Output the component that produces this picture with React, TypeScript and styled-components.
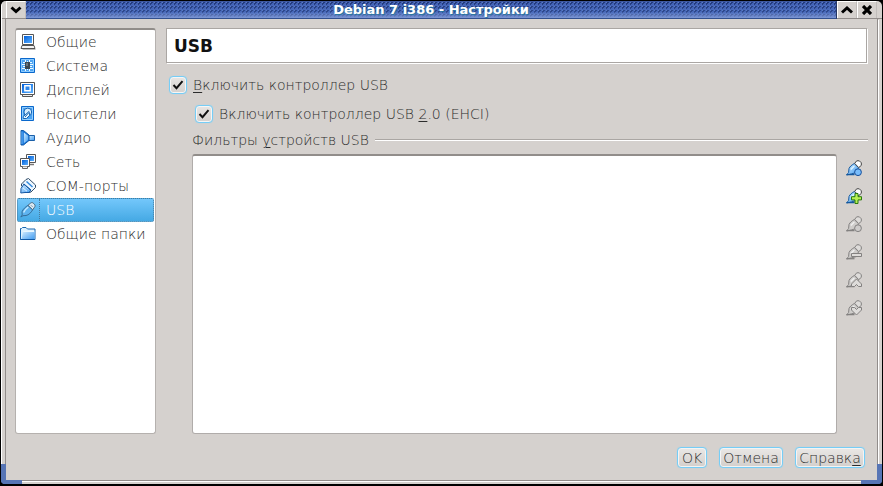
import React from 'react';
import styled, { createGlobalStyle } from 'styled-components';

const Global = createGlobalStyle`
  *, *::before, *::after { box-sizing: border-box; }
  html, body { margin: 0; background: #000; overflow: hidden; }
  body { font: 200 14px/18px "DejaVu Sans", sans-serif; color: #2c2c2c; }
`;

const Frame = styled.div`
  position: relative;
  width: 883px;
  height: 486px;
  padding: 1px 1px 2px;
  background: #000;
  border-radius: 6px;
  overflow: hidden;
`;
const Shell = styled.div`
  height: 483px;
  display: flex;
  flex-direction: column;
  background: #d5d1ce;
  border-left: 1px solid #fff;
  border-radius: 5px;
  overflow: hidden;
`;
const TitleBar = styled.header`
  height: 18px;
  flex: none;
  display: flex;
  border-bottom: 1px solid #918c8a;
  padding: 0 5px 0 4px;
`;
const TitleButton = styled.div`
  width: 20px;
  height: 17px;
  display: grid;
  place-items: center;
  border-left: 1px solid #fff;
  border-top: 1px solid #fff;
  border-right: 1px solid #c0bcba;
  background: #d5d1ce;
`;
const TitleText = styled.div`
  flex: 1;
  height: 18px;
  text-align: center;
  color: #fff;
  font-weight: 700;
  font-size: 13px;
  line-height: 15px;
  text-shadow: 1px 1px 1px #23789e;
  border-bottom: 1px solid #33508f;
  border-top: 1px solid #3d57a0;
  border-right: 1px solid #263763;
  background:
    linear-gradient(rgba(62, 94, 182, 0), rgba(85, 120, 195, 0.25) 60%, rgba(130, 155, 215, 0.9)),
    linear-gradient(135deg, #5c7cc6 12.5%, #22397c 12.5% 37.5%, #4161b4 37.5% 62.5%, #5c7cc6 62.5% 62.5%, #4767b8 62.5% 87.5%, #5c7cc6 87.5%) 0 0 / 4px 4px;
`;
const Content = styled.main`
  flex: 1;
  display: flex;
  margin: 0 4px 0 3px;
  padding: 9px 9px 0;
  border: solid #918c8a;
  border-width: 0 1px 1px;
  gap: 10px;
  box-shadow: 1px 1px 0 #fff, 0 1px 0 #fff;
`;
const BottomEdge = styled.div`
  flex: none;
  height: 3px;
`;
const Corner = styled.div<{ $side: 'left' | 'right' }>`
  position: absolute;
  bottom: 2px;
  ${p => p.$side}: 1px;
  width: 21px;
  height: 20px;
  border: solid #5775b5;
  border-width: 0 0 4px;
  border-${p => p.$side}: 5px solid #5775b5;
  border-bottom-${p => p.$side}-radius: 4px;
`;
const Sidebar = styled.nav`
  width: 141px;
  height: 406px;
  padding: 0 1px 1px;
  border: 1px solid #b5b1ae;
  border-top: 2px solid #918d8a;
  border-radius: 3px;
  background: #fff;
`;
const Item = styled.div<{ $active?: boolean }>`
  height: 24px;
  display: flex;
  align-items: center;
  border-radius: 2px;
  color: ${p => (p.$active ? '#fff' : 'inherit')};
  background: ${p => (p.$active ? 'linear-gradient(#73c7fb, #45a9e4)' : 'none')};
  border: 1px ${p => (p.$active ? 'dotted #487b9b' : 'solid transparent')};
`;
const ItemIcon = styled.span<{ $active?: boolean }>`
  width: 22px;
  height: 22px;
  padding: 3px 0 0 2px;
  line-height: 0;
  border-right: 1px ${p => (p.$active ? 'dotted #487b9b' : 'solid transparent')};
`;
const ItemLabel = styled.span`
  margin-left: 6px;
  white-space: nowrap;
`;
const Page = styled.section`
  width: 702px;
  display: flex;
  flex-direction: column;
`;
const Heading = styled.h1`
  height: 35px;
  flex: none;
  margin: 0;
  padding-left: 7px;
  background: #fff;
  border: 1px solid #aaa6a3;
  box-shadow: 1px 1px 0 #fff;
  width: 701px;
  font-size: 17px;
  line-height: 35px;
  font-weight: 700;
  color: #111;
`;
const CheckRow = styled.label<{ $nested?: boolean }>`
  height: 20px;
  display: flex;
  align-items: center;
  gap: 6px;
  margin: ${p => (p.$nested ? '9px 0 0 29px' : '12px 0 0 3px')};
`;
const CheckBox = styled.span`
  width: 18px;
  height: 18px;
  display: grid;
  place-items: center;
  border: 1px solid #76cdf6;
  border-radius: 4px;
  background: linear-gradient(#e8e6e4, #d5d1ce);
  box-shadow: inset 0 0 0 1px #f6f6f6, 0 0 1px #8ad6f8;
`;
const U = styled.span`
  text-decoration: underline;
  text-decoration-thickness: 1px;
  text-underline-offset: 2px;
`;
const Legend = styled.div`
  height: 20px;
  margin: 6px 0 0 26px;
  display: flex;
  align-items: center;
  gap: 6px;
`;
const Rule = styled.i`
  flex: 1;
  height: 2px;
  border-top: 1px solid #aaa6a3;
  border-bottom: 1px solid #fff;
`;
const FilterArea = styled.div`
  display: flex;
  margin: 4px 0 0 26px;
  gap: 9px;
`;
const FilterList = styled.div`
  width: 645px;
  height: 280px;
  background: #fff;
  border: 1px solid #b0acaa;
  border-top: 2px solid #918d8a;
  border-radius: 3px;
`;
const Tools = styled.div`
  display: flex;
  flex-direction: column;
  gap: 12px;
  padding-top: 6px;
  line-height: 0;
`;
const Footer = styled.footer`
  display: flex;
  justify-content: flex-end;
  gap: 12px;
  margin: 13px 3px 0 0;
`;
const Button = styled.button<{ $w: number }>`
  width: ${p => p.$w}px;
  height: 21px;
  padding: 0;
  font: inherit;
  line-height: 18px;
  color: inherit;
  white-space: nowrap;
  border: 1px solid #76cdf6;
  border-radius: 4px;
  background: linear-gradient(#eae8e6, #d3cfcc);
  box-shadow: inset 0 0 0 1px #f4f4f4, 0 0 1px #8ad6f8;
`;
const DefsSvg = styled.svg`
  position: absolute;
`;

const Svg = ({ children }: { children: React.ReactNode }) => (
  <svg width="16" height="16" viewBox="0 0 16 16">{children}</svg>
);
const Defs = () => (
  <DefsSvg width="0" height="0">
    <defs>
      <linearGradient id="blue" x1="0" y1="0" x2="1" y2="1">
        <stop offset="0" stopColor="#005fd8" /><stop offset="1" stopColor="#5cb0ff" />
      </linearGradient>
      <linearGradient id="sky" x1="0" y1="0" x2="1" y2="1">
        <stop offset="0" stopColor="#d8efff" /><stop offset="1" stopColor="#3d9af2" />
      </linearGradient>
    </defs>
  </DefsSvg>
);

const icons: Record<string, React.ReactNode> = {
  general: <>
    <path d="M2.5.5h11v10h-11z" fill="#fff" stroke="#555" />
    <path d="M4 2h8v7H4z" fill="url(#blue)" />
    <path d="M2 11.5h12l1 3H1z" fill="#f4f4f4" stroke="#555" />
    <path d="M2.5 15.5h13" stroke="#bbb" />
  </>,
  system: <>
    <path d="M.5.5h14v14H.5z" fill="#4ea4f2" stroke="#0a68cc" />
    <path d="M1.5 1.5h12v12h-12z" fill="none" stroke="#8ccbff" />
    <path d="M3 4.5h2M2 6.5h3M3 8.5h2M2 10.5h3M10 4.5h2M10 6.5h3M10 8.5h2M10 10.5h3M5.5 2v2M7.5 3v1M9.5 2v2M5.5 11v2M7.5 11v1M9.5 11v2" stroke="#eefaff" />
    <path d="M5 4h5v7H5z" fill="#3a4650" />
    <path d="M6 5h2v3H6z" fill="#68747c" />
  </>,
  display: <>
    <path d="M.5.5h14v12H.5z" fill="#fff" stroke="#555" />
    <path d="M2 2h11v9H2z" fill="url(#blue)" />
    <path d="M4.8 3.8h5.4v5H4.8z" fill="#2c86ea" stroke="#fff" strokeWidth="1.4" />
    <path d="M2.5 12.5h10v2h-10z" fill="#eee" stroke="#555" />
  </>,
  storage: <>
    <path d="M1.5.5h12v14h-12z" fill="#4ba3f3" stroke="#0a68cc" />
    <path d="M2.5 1.5h10v12h-10z" fill="none" stroke="#93cfff" />
    <circle cx="7.8" cy="6" r="3.9" fill="#d5edff" stroke="#1464b4" />
    <path d="M9 5.5 5 9l-1.8 1.5v2h3.3l3.2-3.2z" fill="#e9f7ff" stroke="#1464b4" />
    <path d="M5 11 8.5 7" stroke="#1464b4" />
  </>,
  audio: <>
    <path d="M8 5.5h6.5v5H8z" fill="url(#sky)" stroke="#1b5fa8" />
    <path d="M1 .5h2.5L9 5v5.5L3.5 15H1z" fill="#1673d8" stroke="#125aa8" />
    <path d="m3.8 2.5 4.4 3.2V10l-4.4 3.2z" fill="url(#sky)" />
    <path d="M2 1.5v12.5" stroke="#69b5f7" />
  </>,
  network: <>
    <path d="M6.5.5h9v8h-9z" fill="#fff" stroke="#555" />
    <path d="M8 2h6v5H8z" fill="url(#blue)" />
    <path d="M10 10.5h4" stroke="#777" strokeWidth="1.5" />
    <path d="M.5 4.5h9v8h-9z" fill="#fff" stroke="#555" />
    <path d="M2 6h6v5H2z" fill="url(#blue)" />
    <path d="M2.5 12.5v2h5v-2" fill="#eee" stroke="#666" />
  </>,
  serial: <>
    <path d="M6 1.5 8.5.5 15.5 7v2.5L11 14l-2 .5L1.5 8V6z" fill="#eef7ff" stroke="#304c66" />
    <path d="m4 6 7 6-2 2.5H5L.8 15 1 10.5z" fill="url(#sky)" stroke="#1458a4" />
    <path d="m6.5 3.5 6 5.5" stroke="#2d87dd" strokeWidth="1.4" />
    <path d="m3 10 4 3.2M5 8l4 3.2" stroke="#e3f4ff" />
    <path d="m3.5 6 7 6" stroke="#1458a4" />
  </>,
  usb: <>
    <path d="M.8 15 2.2 13 2 9.8C3 7 5.5 5 8 3.3l4.7 4.5C11 10.5 9 13 6 13.5l-3 .2z" fill="#5eb3ef" stroke="#356d98" />
    <path d="m8 3.3 2.5-2.1c1.2-.9 2-.8 3 .2l.8.8c1 1 1 2 .2 3l-1.8 2.6z" fill="#dce9f2" stroke="#48687f" />
    <path d="M3.6 10.5C4.5 8 6.2 6.5 8.3 5" fill="none" stroke="#c6eaff" strokeWidth="1.5" />
    <path d="m11 3.3 1.5 1.5" stroke="#6f8da4" />
  </>,
  folder: <>
    <path d="M.5 13.5v-11h1l1-1h3.5l1.5 1.5h7.5v10.5z" fill="#dff2ff" stroke="#1765af" />
    <path d="M1.5 13.5 3 5h12l-.8 8.5z" fill="url(#sky)" />
    <path d="M.5 13.5h14.2" stroke="#1059a6" />
    <path d="M3.2 5.5H14" stroke="#eaf8ff" />
  </>,
};

const Plug = ({ kind, on }: { kind: string; on?: boolean }) => {
  const line = on ? '#14589e' : '#838180';
  const soft = on ? 'url(#sky)' : '#cfcdcb';
  const badge = {
    dot: <circle cx="12" cy="12.2" r="3.4" fill={on ? '#78bcfb' : '#cecccb'} stroke={on ? '#174f99' : line} />,
    plus: <path d="M9 5.5h3v3.2h3.5v3.2H12v3.6H9v-3.6H5.5V8.7H9z" fill="#b7ef55" stroke="#2b7b0d" />,
    minus: <path d="M5.5 9.5h10v3h-10z" fill="#dedcda" stroke={line} />,
    up: <path d="m10.5 7 5 5v2.5h-3l-2-2-2 2h-3V12z" fill="#dedcda" stroke={line} />,
    down: <path d="M5.5 7.5h3l2 2 2-2h3V10l-5 5-5-5z" fill="#dedcda" stroke={line} />,
  }[kind];
  return (
    <Svg>
      <path d="M.6 15 2.6 12.5 3 8.5C4 6.3 6 4.8 8.3 3.5l4.2 4.2-1.8 4.8-5 1.3z" fill={soft} stroke={line} />
      <path d="M.5 14.7h8" stroke={line} strokeWidth="1.3" />
      <path d="m8.7 3.4 2-2.6h2.6l2 2v2.6l-2.6 2.2z" fill={on ? '#fff' : '#dedcda'} stroke={on ? '#444' : line} />
      <path d="M4.8 9.5 8.3 6" stroke={on ? '#d9f2ff' : '#eee'} strokeWidth="1.6" />
      {badge}
    </Svg>
  );
};

const items: [string, string][] = [
  ['general', 'Общие'], ['system', 'Система'], ['display', 'Дисплей'],
  ['storage', 'Носители'], ['audio', 'Аудио'], ['network', 'Сеть'],
  ['serial', 'COM-порты'], ['usb', 'USB'], ['folder', 'Общие папки'],
];

const Check = () => (
  <CheckBox>
    <svg width="12" height="12" viewBox="0 0 12 12">
      <path d="m1.5 6 3 3.2 6-7" fill="none" stroke="#111" strokeWidth="2" />
    </svg>
  </CheckBox>
);

export default function App() {
  return (
    <>
      <Global />
      <Defs />
      <Frame>
        <Shell>
          <TitleBar>
            <TitleButton>
              <svg width="12" height="8" viewBox="0 0 12 8"><path d="m1.5 1.5 4.5 4 4.5-4" fill="none" stroke="#000" strokeWidth="3" /></svg>
            </TitleButton>
            <TitleText>Debian 7 i386 - Настройки</TitleText>
            <TitleButton>
              <svg width="12" height="8" viewBox="0 0 12 8"><path d="m1 6.5 5-4.5 5 4.5" fill="none" stroke="#000" strokeWidth="3" /></svg>
            </TitleButton>
            <TitleButton>
              <svg width="10" height="10" viewBox="0 0 10 10"><path d="m1 1 8 8m0-8L1 9" stroke="#000" strokeWidth="3.2" /></svg>
            </TitleButton>
          </TitleBar>
          <Content>
            <Sidebar>
              {items.map(([icon, text]) => (
                <Item key={icon} $active={icon === 'usb'}>
                  <ItemIcon $active={icon === 'usb'}><Svg>{icons[icon]}</Svg></ItemIcon>
                  <ItemLabel>{text}</ItemLabel>
                </Item>
              ))}
            </Sidebar>
            <Page>
              <Heading>USB</Heading>
              <CheckRow><Check /><span><U>В</U>ключить контроллер USB</span></CheckRow>
              <CheckRow $nested><Check /><span>Включить контроллер USB <U>2</U>.0 (EHCI)</span></CheckRow>
              <Legend><span>Фильтры <U>у</U>стройств USB</span><Rule /></Legend>
              <FilterArea>
                <FilterList />
                <Tools>
                  <Plug kind="dot" on />
                  <Plug kind="plus" on />
                  <Plug kind="dot" />
                  <Plug kind="minus" />
                  <Plug kind="up" />
                  <Plug kind="down" />
                </Tools>
              </FilterArea>
              <Footer>
                <Button $w={30}>OK</Button>
                <Button $w={64}>Отмена</Button>
                <Button $w={70}>Справк<U>а</U></Button>
              </Footer>
            </Page>
          </Content>
          <BottomEdge />
        </Shell>
        <Corner $side="left" />
        <Corner $side="right" />
      </Frame>
    </>
  );
}
